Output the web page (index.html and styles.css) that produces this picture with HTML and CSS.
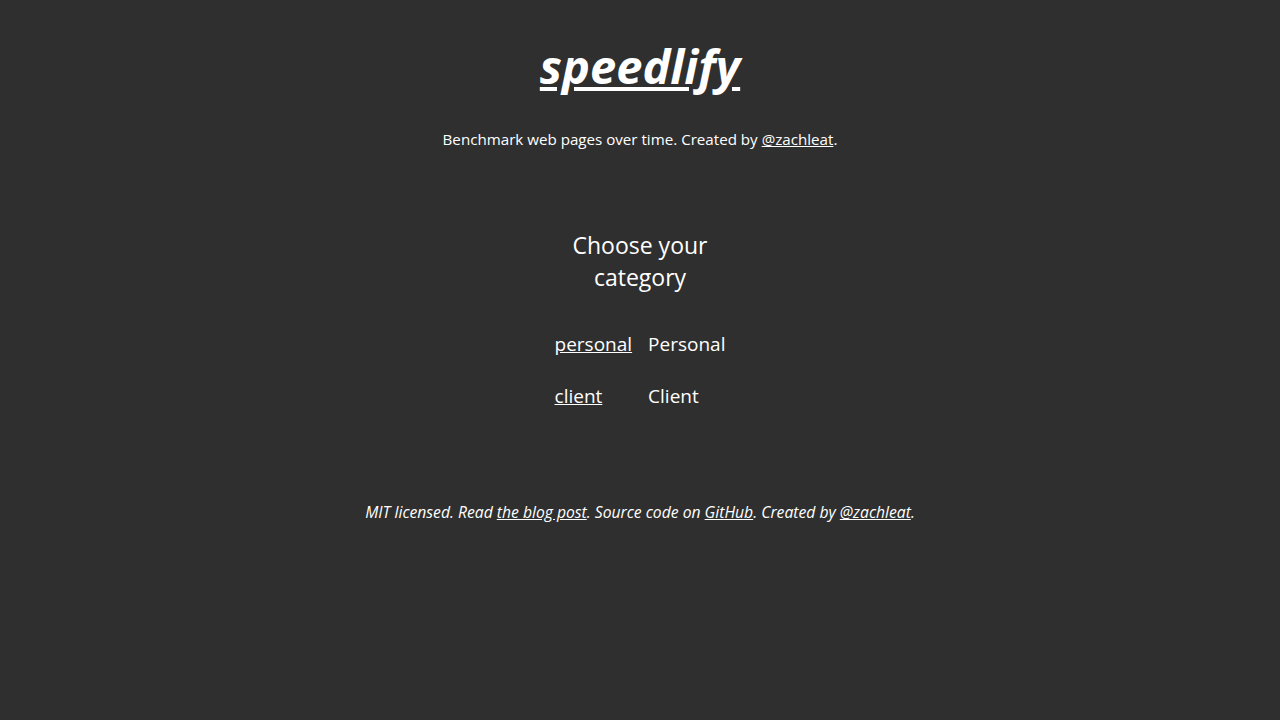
FILE: index.html
```html
<!DOCTYPE html>
<html lang="en">
<head>
<meta charset="utf-8">
<title>speedlify</title>
<link rel="stylesheet" href="styles.css">
</head>
<body>
<header class="header">
  <h1 class="title"><a href="#">speedlify</a></h1>
  <p class="tagline">Benchmark web pages over time. Created by <a href="#">@zachleat</a>.</p>
</header>
<main class="main">
  <table class="categories">
    <caption class="caption">Choose your category</caption>
    <tbody>
      <tr><td class="cell"><a href="#">personal</a></td><td class="cell">Personal</td></tr>
      <tr><td class="cell"><a href="#">client</a></td><td class="cell">Client</td></tr>
    </tbody>
  </table>
</main>
<footer class="footer">
  <p>MIT licensed. Read <a href="#">the blog post</a>. Source code on <a href="#">GitHub</a>. Created by <a href="#">@zachleat</a>.</p>
</footer>
</body>
</html>
```
FILE: styles.css
```css
html { background: #2f2f2f; }
body {
  margin: 0;
  padding: 0;
  background: #2f2f2f;
  color: #fff;
  font-family: "Open Sans", "Noto Sans", sans-serif;
  font-size: 15.15px;
  line-height: 1.5;
  text-align: center;
}
a { color: #fff; }
.header { padding-top: 34px; }
.title {
  margin: 0;
  font-size: 47px;
  font-style: italic;
  font-weight: 700;
  line-height: 64px;
}
.tagline { margin: 29px 0 0; line-height: 24px; }
.main { display: flex; justify-content: center; padding-top: 78px; }
.categories { border-collapse: separate; border-spacing: 0; font-size: 19px; }
.caption { font-size: 23px; line-height: 32px; padding-bottom: 30px; }
.cell { text-align: left; padding: 5px 8px 15px; line-height: 32px; }
.footer { padding-top: 74px; font-style: italic; font-size: 15.7px; }
.footer p { margin: 0; }
```
